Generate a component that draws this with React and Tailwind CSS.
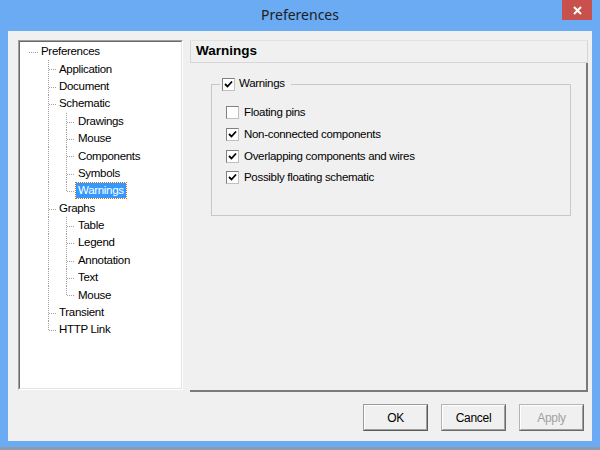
import React from 'react';

const FONT = {
  fontFamily: '"Liberation Sans", Arial, sans-serif',
  letterSpacing: '-0.3px',
};

const tree = [
  { label: 'Preferences', level: 0 },
  { label: 'Application', level: 1 },
  { label: 'Document', level: 1 },
  { label: 'Schematic', level: 1 },
  { label: 'Drawings', level: 2 },
  { label: 'Mouse', level: 2 },
  { label: 'Components', level: 2 },
  { label: 'Symbols', level: 2 },
  { label: 'Warnings', level: 2, last: true, selected: true },
  { label: 'Graphs', level: 1 },
  { label: 'Table', level: 2 },
  { label: 'Legend', level: 2 },
  { label: 'Annotation', level: 2 },
  { label: 'Text', level: 2 },
  { label: 'Mouse', level: 2, last: true },
  { label: 'Transient', level: 1 },
  { label: 'HTTP Link', level: 1, last: true },
];

const TEXT_X = { 0: 21, 1: 39, 2: 58 };
const H = 17.4;

function Connector({ level, last }) {
  const w = TEXT_X[level] - 2;
  const mid = Math.round(H / 2) + 0.5;
  const dot = { stroke: '#a0a0a0', strokeWidth: 1, strokeDasharray: '1 1' };
  return (
    <svg width={w} height={H} className="shrink-0">
      {level === 0 && <line x1="9" y1={mid} x2="19" y2={mid} {...dot} />}
      {level === 1 && (
        <>
          <line x1="28.5" y1="0" x2="28.5" y2={last ? mid : H} {...dot} />
          <line x1="29" y1={mid} x2="37" y2={mid} {...dot} />
        </>
      )}
      {level === 2 && (
        <>
          <line x1="28.5" y1="0" x2="28.5" y2={H} {...dot} />
          <line x1="46.5" y1="0" x2="46.5" y2={last ? mid : H} {...dot} />
          <line x1="47" y1={mid} x2="55" y2={mid} {...dot} />
        </>
      )}
    </svg>
  );
}

function Check({ checked }) {
  return (
    <span className="w-[13px] h-[13px] shrink-0 bg-white border border-t-[#808080] border-l-[#808080] border-r-[#c0c0c0] border-b-[#c0c0c0] flex items-center justify-center">
      {checked && (
        <svg width="9" height="9" viewBox="0 0 9 9">
          <polyline points="1,4 3.5,6.5 8,1.5" fill="none" stroke="#000" strokeWidth="1.8" />
        </svg>
      )}
    </span>
  );
}

function Button({ children, isDefault, disabled }) {
  return (
    <div
      className={
        'w-[65px] h-[27px] bg-[#f0f0f0] flex items-center justify-center text-[12px] border ' +
        (isDefault
          ? 'border-[#5a5a5a] border-t-[#9a9a9a] border-l-[#9a9a9a]'
          : 'border-[#6a6a6a] border-t-[#b4b4b4] border-l-[#b4b4b4]') +
        (disabled ? ' text-[#a0a0a0]' : ' text-black')
      }
      style={FONT}
    >
      <div className="w-full h-full flex items-center justify-center border border-t-white border-l-white border-r-[#a0a0a0] border-b-[#a0a0a0]">
        {children}
      </div>
    </div>
  );
}

export default function App() {
  const warnings = [
    { label: 'Floating pins', checked: false },
    { label: 'Non-connected components', checked: true },
    { label: 'Overlapping components and wires', checked: true },
    { label: 'Possibly floating schematic', checked: true },
  ];

  return (
    <div className="w-[600px] h-[450px] bg-[#8e9cad] overflow-hidden">
      <div className="w-[600px] h-[447px] bg-[#6aabf3] flex flex-col">
        <div className="h-[31px] relative flex items-center justify-center">
          <span
            className="text-[14px] text-[#202020] -mt-[2px]"
            style={{ fontFamily: '"Noto Sans", "Open Sans", sans-serif' }}
          >
            Preferences
          </span>
          <div className="absolute right-[8px] top-0 w-[30px] h-[20px] bg-[#c8504d] flex items-center justify-center">
            <svg width="9" height="9" viewBox="0 0 9 9">
              <path d="M1 1 L8 8 M8 1 L1 8" stroke="#fff" strokeWidth="2" />
            </svg>
          </div>
        </div>

        <div className="mx-[8px] h-[410px] bg-[#f0f0f0] flex flex-col" style={FONT}>
          <div className="flex pl-[10px] pt-[9px] gap-[7px]">
            {/* tree */}
            <div className="w-[165px] h-[350px] border border-t-[#a0a0a0] border-l-[#a0a0a0] border-r-white border-b-white">
              <div className="w-full h-full bg-white border border-t-[#696969] border-l-[#696969] border-r-[#e3e3e3] border-b-[#e3e3e3] text-[11.5px] text-black pt-[1px]">
                {tree.map((n, i) => (
                  <div key={i} className="flex items-center" style={{ height: H }}>
                    <Connector level={n.level} last={n.last} />
                    <span
                      className={
                        'px-[2px] leading-[15px] ' +
                        (n.selected
                          ? 'bg-[#3399ff] text-white outline outline-1 outline-dotted outline-[#c07020]'
                          : '')
                      }
                    >
                      {n.label}
                    </span>
                  </div>
                ))}
              </div>
            </div>

            {/* right panel */}
            <div className="w-[398px] h-[352px] flex flex-col">
              <div className="h-[23px] border border-[#d6d6d6] border-t-[#e2e2e2] flex items-center pl-[5px]">
                <span className="font-bold text-[13.5px] text-black tracking-normal">
                  Warnings
                </span>
              </div>
              <div className="flex-1 border-r-2 border-b-2 border-r-[#7a7a7a] border-b-[#7a7a7a] pl-[21px] pt-[14px]">
                <fieldset className="w-[360px] h-[139px] border border-[#c8c8c8] text-[11.5px] text-black">
                  <legend className="ml-[8px] pl-[2px] pr-[6px] flex items-center gap-[4px] h-[14px]">
                    <Check checked />
                    <span>Warnings</span>
                  </legend>
                  <div className="pt-[11px] pl-[14px] flex flex-col">
                    {warnings.map((w) => (
                      <div key={w.label} className="h-[21.7px] flex items-center gap-[5px]">
                        <Check checked={w.checked} />
                        <span>{w.label}</span>
                      </div>
                    ))}
                  </div>
                </fieldset>
              </div>
            </div>
          </div>

          <div className="flex justify-end gap-[13px] pr-[8px] mt-[12px]">
            <Button isDefault>OK</Button>
            <Button>Cancel</Button>
            <Button disabled>Apply</Button>
          </div>
        </div>
      </div>
    </div>
  );
}
